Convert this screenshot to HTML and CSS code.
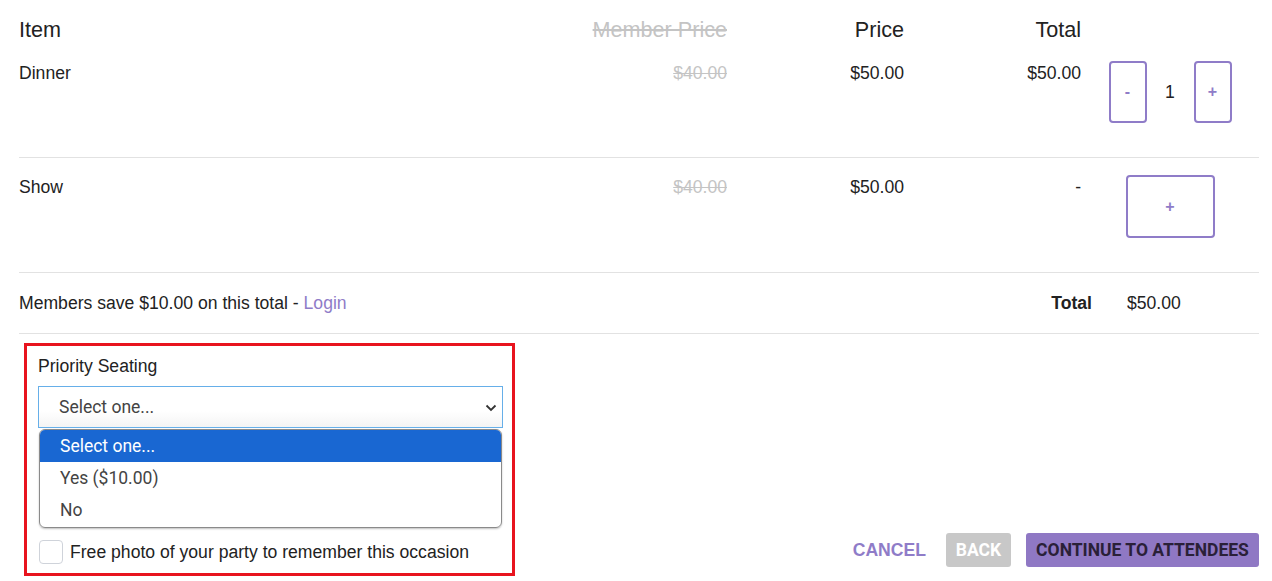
FILE: index.html
```html
<!DOCTYPE html>
<html>
<head>
<meta charset="utf-8">
<link rel="stylesheet" href="styles.css">
</head>
<body>
<div class="page">
  <div class="row head">
    <div class="c-item">Item</div>
    <div class="c-member strike">Member Price</div>
    <div class="c-price">Price</div>
    <div class="c-total">Total</div>
    <div class="c-ctl"></div>
  </div>
  <div class="row item">
    <div class="c-item">Dinner</div>
    <div class="c-member strike">$40.00</div>
    <div class="c-price">$50.00</div>
    <div class="c-total">$50.00</div>
    <div class="c-ctl ctl">
      <button class="qbtn">-</button>
      <span class="qty">1</span>
      <button class="qbtn">+</button>
    </div>
  </div>
  <div class="row item item-show">
    <div class="c-item">Show</div>
    <div class="c-member strike">$40.00</div>
    <div class="c-price">$50.00</div>
    <div class="c-total">-</div>
    <div class="c-ctl ctl ctl-show">
      <button class="addbtn">+</button>
    </div>
  </div>
  <div class="summary">
    <div class="save">Members save $10.00 on this total - <a class="login">Login</a></div>
    <div class="sum-label">Total</div>
    <div class="sum-value">$50.00</div>
  </div>
  <div class="bottom">
    <div class="addons">
      <div class="label">Priority Seating</div>
      <div class="select">
        <span>Select one...</span>
        <svg class="chev" width="12" height="8" viewBox="0 0 12 8"><path d="M1.5 1.5 L6 6 L10.5 1.5" fill="none" stroke="#333" stroke-width="1.8"/></svg>
      </div>
      <div class="listbox">
        <div class="opt active">Select one...</div>
        <div class="opt">Yes ($10.00)</div>
        <div class="opt">No</div>
      </div>
      <label class="check">
        <span class="box"></span>
        <span>Free photo of your party to remember this occasion</span>
      </label>
    </div>
    <div class="actions">
      <button class="btn-cancel">Cancel</button>
      <button class="btn-back">Back</button>
      <button class="btn-continue">Continue to Attendees</button>
    </div>
  </div>
</div>
</body>
</html>
```
FILE: styles.css
```css
* { box-sizing: border-box; }
html, body { margin: 0; padding: 0; background: #fff; }
body {
  font-family: "Liberation Sans", Arial, sans-serif;
  font-size: 17.6px;
  color: #222;
}
.page {
  margin-left: 19px;
  width: 1240px;
}
.row {
  display: grid;
  grid-template-columns: 531px 177px 177px 177px 178px;
}
.c-member, .c-price, .c-total { text-align: right; }
.strike { color: #c4c4c4; text-decoration: line-through; }
.head {
  height: 43px;
  padding-top: 18px;
  font-size: 21.6px;
  line-height: 24px;
}
.item {
  height: 115px;
  border-bottom: 1px solid #e2e2e2;
  padding-top: 20px;
  line-height: 20px;
}
.item-show { padding-top: 19px; }
.ctl {
  display: flex;
  justify-content: center;
  align-items: center;
  margin-top: -2px;
  align-self: start;
}
.ctl-show { margin-top: -2px; }
.qbtn, .addbtn {
  background: #fff;
  border: 2px solid #8f7cc8;
  border-radius: 4px;
  color: #8f7cc8;
  font-family: "Liberation Sans", Arial, sans-serif;
  font-weight: bold;
  font-size: 16px;
  padding: 0;
  cursor: pointer;
}
.qbtn { width: 38px; height: 62px; }
.addbtn { width: 89px; height: 63px; }
.qty { width: 47px; text-align: center; font-size: 17.6px; }
.summary {
  display: flex;
  align-items: center;
  height: 61px;
  border-bottom: 1px solid #e2e2e2;
  line-height: 20px;
}
.save { flex: 1; }
.login { color: #8f7cc8; text-decoration: none; }
.sum-label { font-weight: bold; margin-right: 35px; }
.sum-value { width: 132px; }
.bottom {
  display: flex;
  align-items: flex-end;
  margin-top: 9px;
}
.addons {
  margin-left: 5px;
  width: 491px;
  border: 3px solid #e8141e;
  padding: 10px 9px 9px 11px;
}
.label { line-height: 20px; margin-bottom: 10px; }
.select {
  height: 42px;
  border: 1px solid #66afe9;
  background: linear-gradient(#fff 60%, #f4f4f4);
  display: flex;
  align-items: center;
  justify-content: space-between;
  padding: 0 5px 0 20px;
  font-family: Roboto, sans-serif;
  color: #444;
  font-size: 17.5px;
}
.chev { margin-top: 1px; }
.listbox {
  margin: 1px 1px 0 1px;
  border: 1px solid #8a8a8a;
  border-radius: 6px;
  overflow: hidden;
  font-family: Roboto, sans-serif;
  font-size: 17.5px;
  color: #444;
  box-shadow: 0 1px 2px rgba(0,0,0,0.25);
  padding-bottom: 1px;
}
.opt {
  height: 32px;
  line-height: 33px;
  padding-left: 20px;
}
.opt.active { background: #1967d2; color: #fff; }
.check {
  display: flex;
  align-items: center;
  margin-top: 12px;
  gap: 7px;
  line-height: 20px;
  color: #222;
}
.box {
  width: 24px;
  height: 24px;
  border: 1.5px solid #cfd3da;
  border-radius: 4px;
  margin-left: 1px;
  background: #fff;
}
.actions {
  flex: 1;
  display: flex;
  justify-content: flex-end;
  align-items: center;
  margin-bottom: 9px;
}
.actions button {
  font-family: Roboto, sans-serif;
  font-weight: bold;
  font-size: 17.5px;
  text-transform: uppercase;
  height: 34px;
  border: none;
  border-radius: 3px;
  padding: 0;
  cursor: pointer;
}
.actions .btn-cancel {
  font-family: "Liberation Sans", Arial, sans-serif;
  font-size: 17.6px;
  background: transparent;
  color: #8f7cc8;
  margin-right: 20px;
}
.btn-back { background: #c8c8c8; color: #fff; width: 65px; margin-right: 15px; }
.btn-continue { background: #8f78c4; color: #2a2038; width: 233px; }
```
